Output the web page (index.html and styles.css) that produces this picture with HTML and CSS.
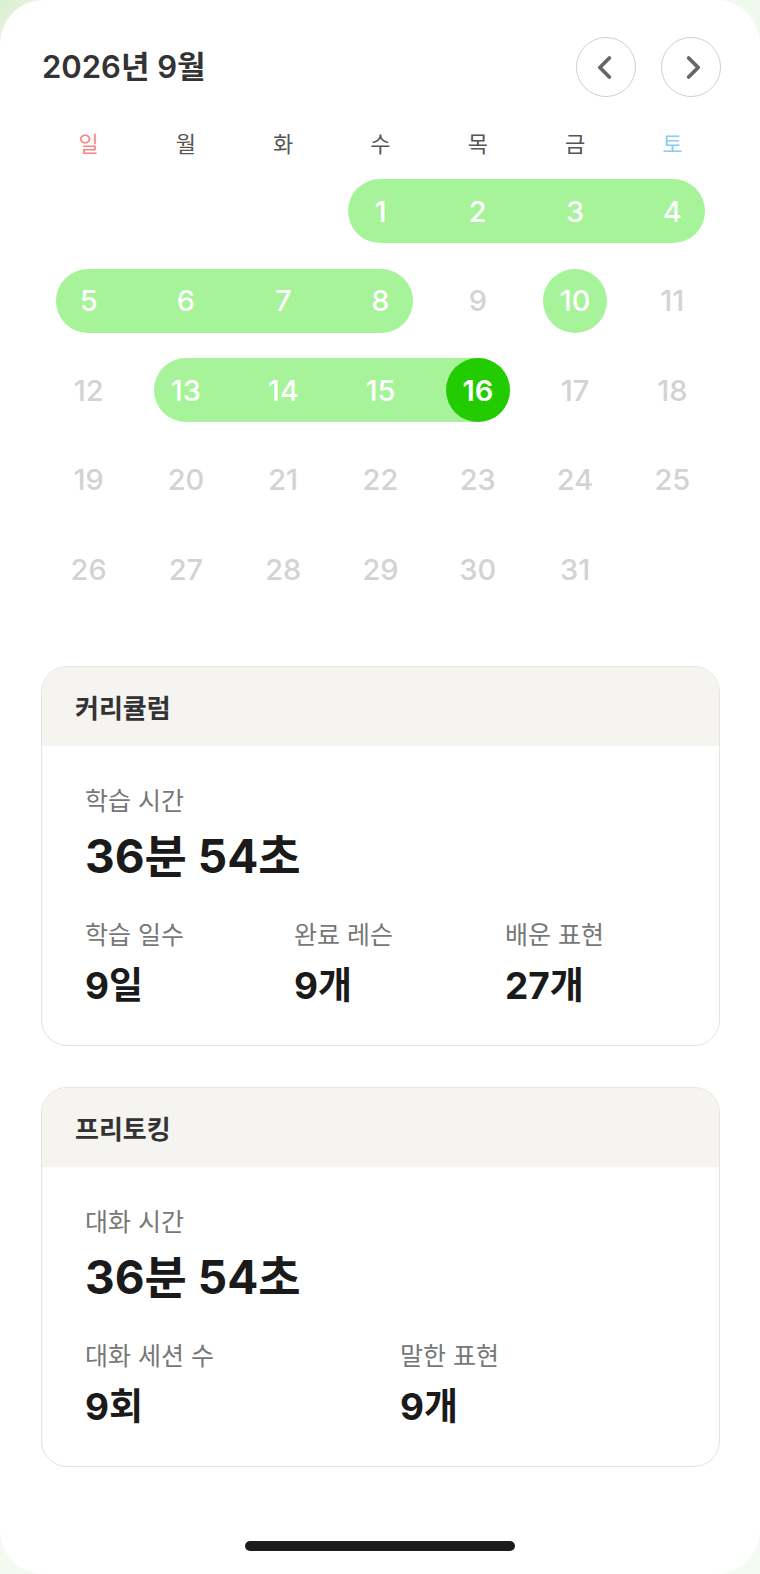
FILE: index.html
```html
<!DOCTYPE html>
<html lang="ko">
<head>
<meta charset="utf-8">
<title>2026년 9월</title>
<link rel="stylesheet" href="styles.css">
</head>
<body>
<div class="panel">
  <section class="calendar">
    <div class="cal-head">
      <h1 class="month">2026년 9월</h1>
      <div class="nav">
        <button class="nav-btn" aria-label="이전 달">
          <svg viewBox="0 0 60 60" width="60" height="60"><path d="M33 20 L23 30 L33 40" fill="none" stroke="#666" stroke-width="4" stroke-linecap="round" stroke-linejoin="round"/></svg>
        </button>
        <button class="nav-btn" aria-label="다음 달">
          <svg viewBox="0 0 60 60" width="60" height="60"><path d="M27 20 L37 30 L27 40" fill="none" stroke="#666" stroke-width="4" stroke-linecap="round" stroke-linejoin="round"/></svg>
        </button>
      </div>
    </div>

    <div class="weekdays">
      <span class="wd sun">일</span>
      <span class="wd">월</span>
      <span class="wd">화</span>
      <span class="wd">수</span>
      <span class="wd">목</span>
      <span class="wd">금</span>
      <span class="wd sat">토</span>
    </div>

    <div class="weeks">
      <div class="week">
        <div class="pill c4-8"></div>
        <span class="day on c4">1</span>
        <span class="day on c5">2</span>
        <span class="day on c6">3</span>
        <span class="day on c7">4</span>
      </div>
      <div class="week">
        <div class="pill c1-5"></div>
        <div class="pill c6-7"></div>
        <span class="day on c1">5</span>
        <span class="day on c2">6</span>
        <span class="day on c3">7</span>
        <span class="day on c4">8</span>
        <span class="day c5">9</span>
        <span class="day on c6">10</span>
        <span class="day c7">11</span>
      </div>
      <div class="week">
        <div class="pill c2-6"></div>
        <span class="day c1">12</span>
        <span class="day on c2">13</span>
        <span class="day on c3">14</span>
        <span class="day on c4">15</span>
        <span class="day on today c5"><span class="dot">16</span></span>
        <span class="day c6">17</span>
        <span class="day c7">18</span>
      </div>
      <div class="week">
        <span class="day c1">19</span>
        <span class="day c2">20</span>
        <span class="day c3">21</span>
        <span class="day c4">22</span>
        <span class="day c5">23</span>
        <span class="day c6">24</span>
        <span class="day c7">25</span>
      </div>
      <div class="week">
        <span class="day c1">26</span>
        <span class="day c2">27</span>
        <span class="day c3">28</span>
        <span class="day c4">29</span>
        <span class="day c5">30</span>
        <span class="day c6">31</span>
      </div>
    </div>
  </section>

  <section class="cards">
    <article class="card">
      <header class="card-head">커리큘럼</header>
      <div class="card-body">
        <div class="label">학습 시간</div>
        <div class="big">36분 54초</div>
        <div class="stats three">
          <div class="stat"><div class="label">학습 일수</div><div class="value">9일</div></div>
          <div class="stat"><div class="label">완료 레슨</div><div class="value">9개</div></div>
          <div class="stat"><div class="label">배운 표현</div><div class="value">27개</div></div>
        </div>
      </div>
    </article>

    <article class="card">
      <header class="card-head">프리토킹</header>
      <div class="card-body">
        <div class="label">대화 시간</div>
        <div class="big">36분 54초</div>
        <div class="stats two">
          <div class="stat"><div class="label">대화 세션 수</div><div class="value">9회</div></div>
          <div class="stat"><div class="label">말한 표현</div><div class="value">9개</div></div>
        </div>
      </div>
    </article>
  </section>

  <div class="home-bar"></div>
</div>
</body>
</html>
```

FILE: styles.css
```css
* { box-sizing: border-box; }

html, body {
  margin: 0;
  padding: 0;
}

body {
  width: 760px;
  height: 1574px;
  background: radial-gradient(circle at 0 0, #d9efd2 0, #eef8ea 60px, #f4fbf2 100%);
  font-family: "Noto Sans CJK KR", "Noto Sans", sans-serif;
  color: #333;
}

.panel {
  width: 760px;
  height: 1574px;
  background: #fff;
  border-radius: 44px;
  display: flex;
  flex-direction: column;
  overflow: hidden;
}

/* calendar */
.calendar {
  padding: 37px 39px 0 40px;
}

.cal-head {
  display: flex;
  align-items: center;
  justify-content: space-between;
  padding-left: 2px;
}

.month {
  margin: 0;
  font-family: "Inter", "Noto Sans CJK KR", sans-serif;
  font-size: 31px;
  font-weight: 600;
  color: #333;
  line-height: 60px;
}

.nav {
  display: flex;
  gap: 25px;
}

.nav-btn {
  width: 60px;
  height: 60px;
  padding: 0;
  border: 1.5px solid #cfcfcf;
  border-radius: 50%;
  background: #fff;
  display: flex;
  align-items: center;
  justify-content: center;
}

.nav-btn svg {
  display: block;
  width: 57px;
  height: 57px;
}

.weekdays {
  display: grid;
  grid-template-columns: repeat(7, 1fr);
  margin-top: 25px;
  height: 40px;
  align-items: center;
}

.wd {
  text-align: center;
  font-size: 22px;
  color: #555;
}

.wd.sun { color: #f38b8b; }
.wd.sat { color: #8ccdf3; }

.weeks {
  margin-top: 17px;
  display: flex;
  flex-direction: column;
  gap: 25.5px;
}

.week {
  display: grid;
  grid-template-columns: repeat(7, 1fr);
  height: 64px;
}

.pill {
  grid-row: 1;
  margin: 0 16.3px;
  background: #a6f39a;
  border-radius: 32px;
}

.c4-8 { grid-column: 4 / 8; }
.c1-5 { grid-column: 1 / 5; }
.c6-7 { grid-column: 6 / 7; }
.c2-6 { grid-column: 2 / 6; }

.day {
  grid-row: 1;
  display: flex;
  align-items: center;
  justify-content: center;
  font-family: "Inter", "Noto Sans", sans-serif;
  font-size: 29px;
  font-weight: 500;
  color: #d3d3d1;
  z-index: 1;
}

.day.on { color: #fff; }

.c1 { grid-column: 1; }
.c2 { grid-column: 2; }
.c3 { grid-column: 3; }
.c4 { grid-column: 4; }
.c5 { grid-column: 5; }
.c6 { grid-column: 6; }
.c7 { grid-column: 7; }

.dot {
  width: 64px;
  height: 64px;
  border-radius: 50%;
  background: #22cc00;
  display: flex;
  align-items: center;
  justify-content: center;
  font-weight: 600;
}

/* cards */
.cards {
  padding: 65px 40px 0 41px;
  display: flex;
  flex-direction: column;
  gap: 41px;
}

.card {
  border: 1.5px solid #e4e3de;
  border-radius: 26px;
  overflow: hidden;
  background: #fff;
}

.card-head {
  height: 79px;
  background: #f5f4f1;
  padding-left: 33px;
  display: flex;
  align-items: center;
  font-size: 26px;
  font-weight: 600;
  color: #333;
}

.card-body {
  padding: 37px 0 35px 43px;
}

.label {
  font-size: 25px;
  line-height: 32px;
  color: #777;
}

.big {
  margin-top: 13px;
  font-family: "Inter", "Noto Sans CJK KR", sans-serif;
  font-size: 46px;
  line-height: 56px;
  font-weight: 700;
  color: #1a1a1a;
}

.stats {
  display: grid;
  margin-top: 33px;
}

.stats.three { grid-template-columns: 209px 211px 1fr; }
.stats.two { grid-template-columns: 315px 1fr; }

.value {
  margin-top: 13px;
  font-family: "Inter", "Noto Sans CJK KR", sans-serif;
  font-size: 37px;
  line-height: 48px;
  font-weight: 700;
  color: #1a1a1a;
}

.home-bar {
  margin: auto auto 23px;
  width: 270px;
  height: 10px;
  border-radius: 5px;
  background: #1c1c1c;
}
```
